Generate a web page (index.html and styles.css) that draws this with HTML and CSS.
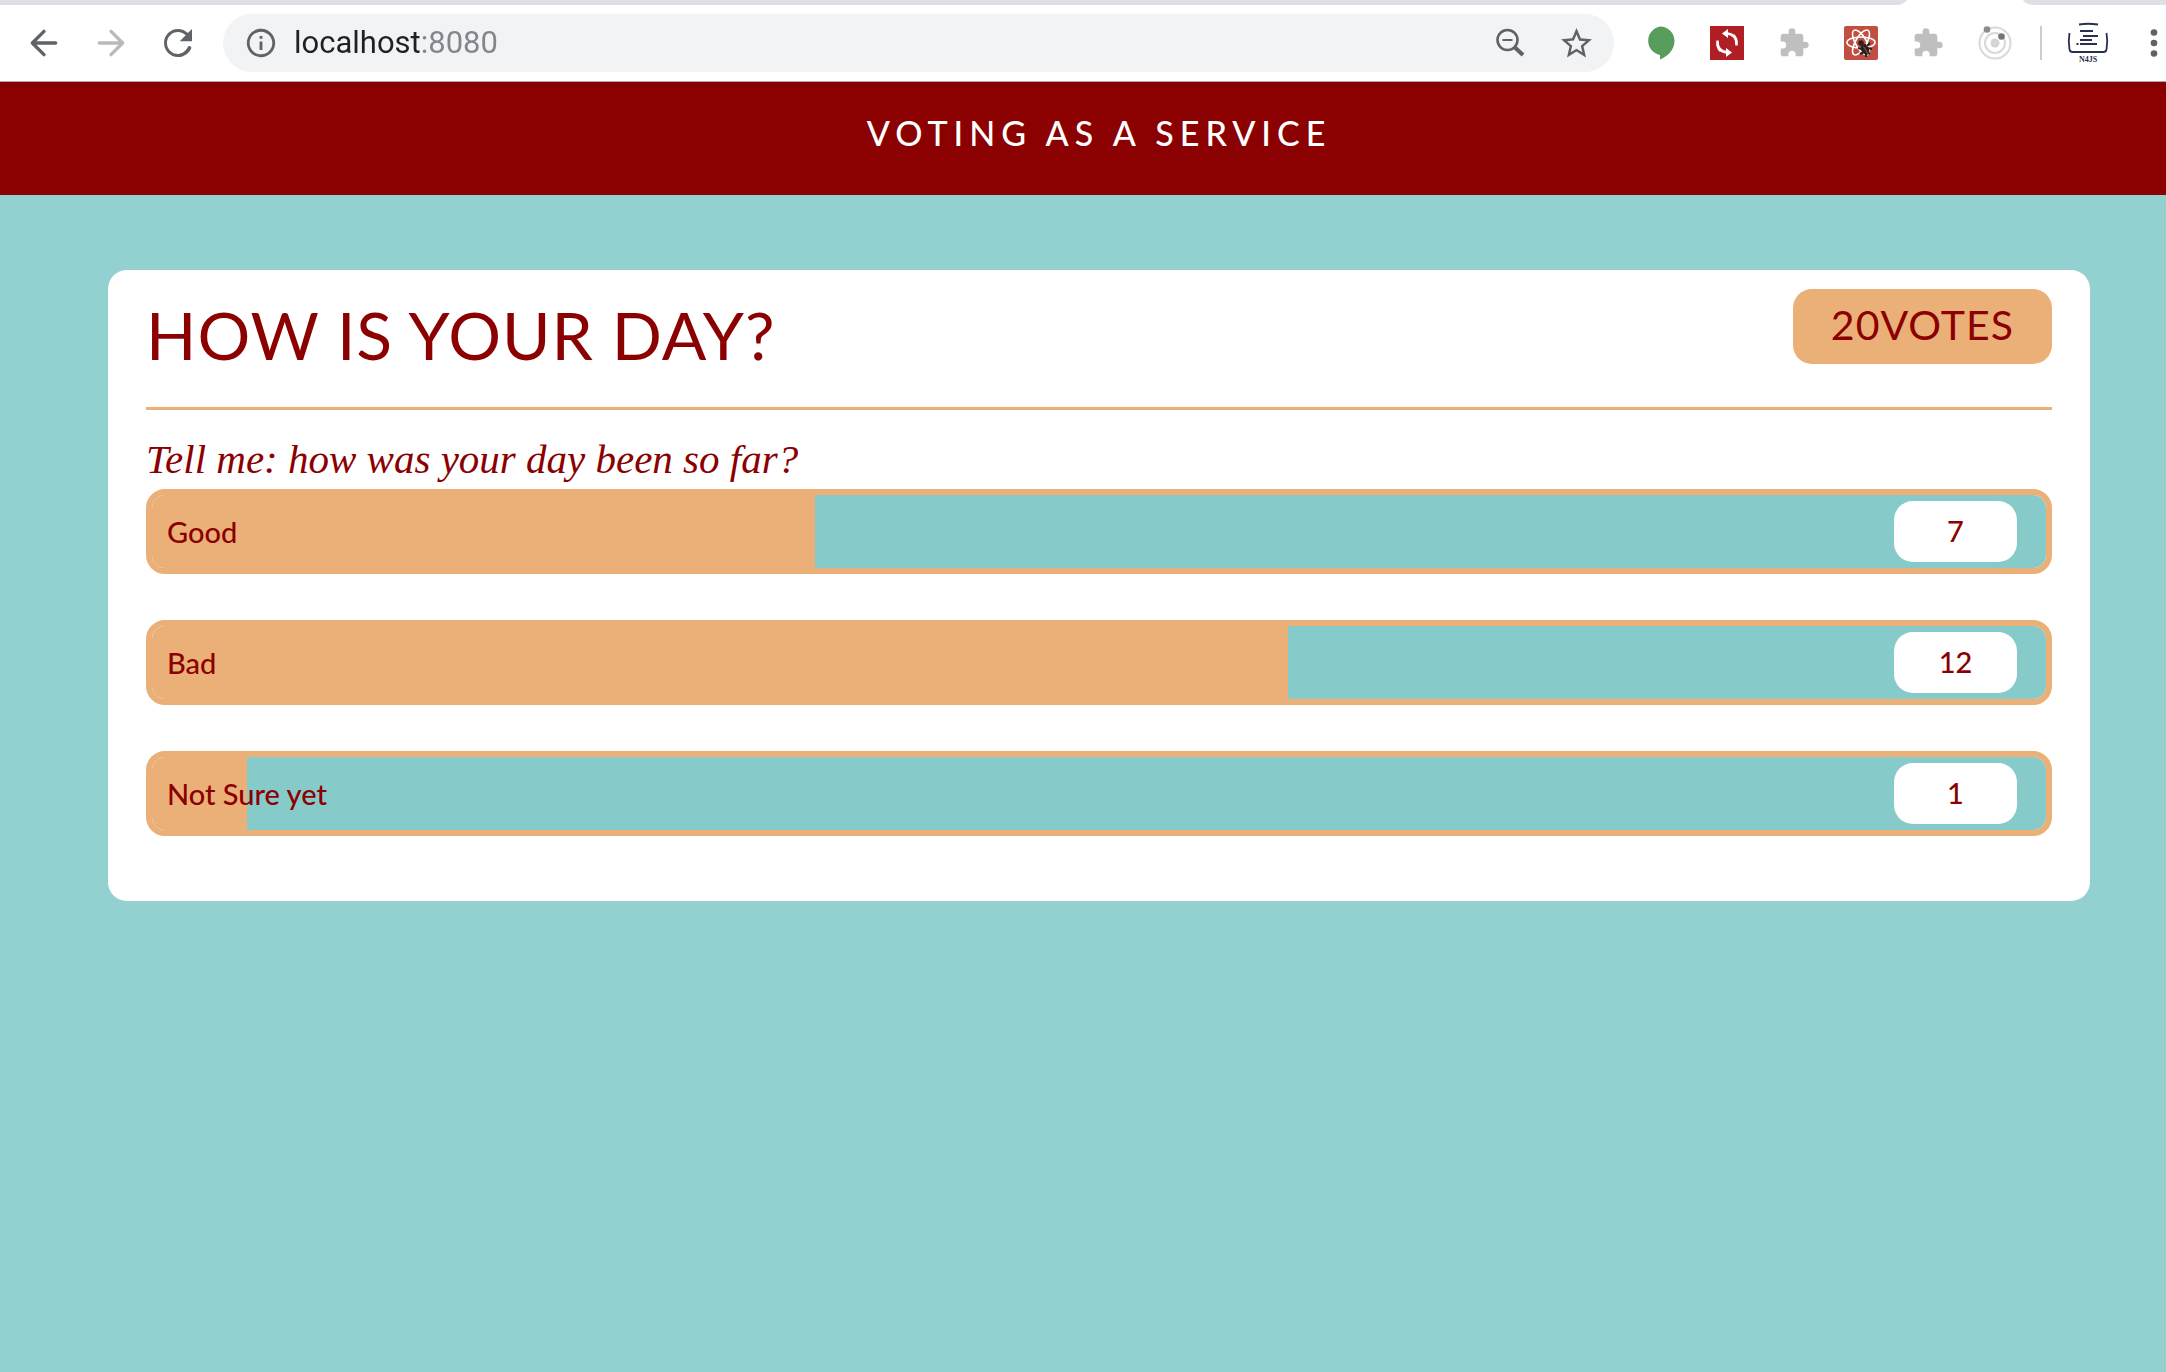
FILE: index.html
```html
<!DOCTYPE html>
<html lang="en">
<head>
<meta charset="utf-8">
<meta name="viewport" content="width=device-width, initial-scale=1">
<title>Voting as a Service</title>
<link rel="stylesheet" href="styles.css">
</head>
<body>
<div class="tabstrip">
  <svg class="active-tab" width="136" height="5" viewBox="0 0 136 5" aria-hidden="true"><path d="M0 5C6 4.500 9 2 10 0H126C127 2 130 4.500 136 5z" fill="#fff"/></svg>
</div>
<nav class="toolbar" aria-label="Browser">
  <button class="tool" type="button" aria-label="Back"><svg width="40" height="40" viewBox="0 0 24 24" fill="none" stroke="#5f6368" stroke-width="2" stroke-linecap="round" stroke-linejoin="round"><path d="M19 12H5M12 5l-7 7 7 7"/></svg></button>
  <button class="tool" type="button" aria-label="Forward"><svg width="40" height="40" viewBox="0 0 24 24" fill="none" stroke="#bababa" stroke-width="2" stroke-linecap="round" stroke-linejoin="round"><path d="M5 12h14M12 5l7 7-7 7"/></svg></button>
  <button class="tool" type="button" aria-label="Reload"><svg width="42" height="42" viewBox="0 0 24 24" fill="#5f6368"><path d="M17.65 6.35C16.2 4.9 14.21 4 12 4c-4.42 0-7.99 3.58-7.99 8s3.57 8 7.99 8c3.4 0 6.5-2.2 7.6-5.2.3-.9-1.500-1.600-1.950-.6C16.700 16.500 14.500 18.300 12 18.300c-3.400 0-6.300-2.800-6.300-6.300S8.600 5.700 12 5.700c1.800 0 3.300.700 4.400 1.900L13 11h7V4z"/></svg></button>
  <div class="omnibox">
    <svg width="34" height="34" viewBox="0 0 24 24" fill="#5f6368" aria-hidden="true"><path d="M11 17h2v-6h-2v6zm1-15C6.480 2 2 6.480 2 12s4.480 10 10 10 10-4.480 10-10S17.520 2 12 2zm0 18c-4.410 0-8-3.590-8-8s3.590-8 8-8 8 3.590 8 8-3.590 8-8 8zM11 9h2V7h-2v2z"/></svg>
    <input class="address" type="text" aria-label="Address" value="localhost:8080">
    <button class="tool" type="button" aria-label="Zoom"><svg width="40" height="40" viewBox="0 0 40 40" fill="none" stroke="#5f6368"><circle cx="17.500" cy="17" r="10" stroke-width="2.600"/><path d="M12.500 17h10" stroke-width="2"/><path d="M25 24.500l8 7.500" stroke-width="4"/></svg></button>
    <button class="tool" type="button" aria-label="Bookmark"><svg width="37" height="37" viewBox="0 0 24 24" fill="#5f6368"><path d="M22 9.240l-7.190-.62L12 2 9.190 8.630 2 9.240l5.460 4.730L5.820 21 12 17.270 18.180 21l-1.630-7.030L22 9.240zM12 15.400l-3.760 2.270 1-4.280-3.320-2.880 4.380-.38L12 6.100l1.710 4.040 4.380.38-3.320 2.880 1 4.280L12 15.400z"/></svg></button>
  </div>
  <button class="tool" type="button" aria-label="Chat"><svg width="34" height="34" viewBox="0 0 34 34"><path d="M17 .5a14.500 14.500 0 0 1 14.500 14.500c0 9-7 15.500-14.500 18.500v-4.500A14.500 14.500 0 0 1 17 .5z" fill="#589d5c"/></svg></button>
  <button class="tool" type="button" aria-label="Sync"><svg width="34" height="34" viewBox="0 0 34 34"><path d="M0 0h34v34H0z" fill="#b11f24"/><g fill="none" stroke="#fff" stroke-width="2.400"><path d="M10.500 25A10 10 0 0 1 7.800 16M23.500 9A10 10 0 0 1 26.200 18"/><path d="M7.800 18A10 10 0 0 0 14 26.800M26.200 16A10 10 0 0 0 20 7.500" stroke-width="0"/><path d="M13 26Q20 29 24.500 23M21 8Q14 5 9.500 11" stroke-width="0"/><path d="M16 7.500Q27 8 26.500 19.500M18 26.500Q7 26 7.500 14.500"/></g><path d="M12 7.500l6-4.500v9zM22 26.500l-6 4.500v-9z" fill="#fff"/></svg></button>
  <button class="tool" type="button" aria-label="Extension one"><svg width="32" height="32" viewBox="0 0 24 24" fill="#bfbfbf"><path d="M20.500 11H19V7c0-1.100-.9-2-2-2h-4V3.500a2.500 2.500 0 0 0-5 0V5H4c-1.100 0-1.990.9-1.990 2v3.800H3.500a2.700 2.700 0 0 1 0 5.400H2V20c0 1.100.9 2 2 2h3.800v-1.500a2.700 2.700 0 0 1 5.400 0V22H17c1.100 0 2-.9 2-2v-4h1.500a2.500 2.500 0 0 0 0-5z"/></svg></button>
  <button class="tool" type="button" aria-label="React developer tools"><svg width="34" height="34" viewBox="0 0 34 34"><rect width="34" height="34" rx="2" fill="#c04f42"/><g fill="none" stroke="#fff" stroke-width="1.600"><ellipse cx="17" cy="16.500" rx="14" ry="5.500"/><ellipse cx="17" cy="16.500" rx="14" ry="5.500" transform="rotate(60 17 16.500)"/><ellipse cx="17" cy="16.500" rx="14" ry="5.500" transform="rotate(120 17 16.500)"/></g><g fill="#2b211f" stroke="#2b211f"><circle cx="17" cy="17" r="2.800" stroke="none"/><ellipse cx="21" cy="23.500" rx="3.800" ry="5.500" transform="rotate(-35 21 23.500)" stroke="none"/><path d="M14 22l4 1M16 28l4-2M26 28l-2-1M28 23l-4-1M26 17l-3 3M21 18v3M22 31v-3" stroke-width="2.200"/></g><path d="M19.500 20.500l4.500 7" stroke="#c04f42"/></svg></button>
  <button class="tool" type="button" aria-label="Extension two"><svg width="32" height="32" viewBox="0 0 24 24" fill="#bfbfbf"><path d="M20.500 11H19V7c0-1.100-.9-2-2-2h-4V3.500a2.500 2.500 0 0 0-5 0V5H4c-1.100 0-1.990.9-1.990 2v3.800H3.500a2.700 2.700 0 0 1 0 5.400H2V20c0 1.100.9 2 2 2h3.800v-1.500a2.700 2.700 0 0 1 5.400 0V22H17c1.100 0 2-.9 2-2v-4h1.500a2.500 2.500 0 0 0 0-5z"/></svg></button>
  <button class="tool" type="button" aria-label="Orbit"><svg width="34" height="34" viewBox="0 0 34 34"><g fill="none" stroke="#d9d9d9" stroke-width="2"><circle cx="17" cy="17" r="15.500"/><circle cx="17" cy="17" r="10"/></g><circle cx="17" cy="17" r="4.500" fill="#d4d4d4"/><circle cx="9" cy="3.500" r="3.300" fill="#8c8c8c"/><circle cx="23.500" cy="10.500" r="3.300" fill="#757575"/></svg></button>
  <span class="divider"></span>
  <button class="tool" type="button" aria-label="Profile"><svg width="42" height="42" viewBox="0 0 42 42"><g fill="none" stroke="#2a3050" stroke-width="1.800"><path d="M12 2.500q9-1.500 19 0M2.500 11q-1.500 8 0 16.500q.5 2.500 3 2.500h31q2.500 0 3-2.500q1.500-8.500 0-16.500M13 9h13M16 14h15M13 18h12M13 22h17M9.500 22h2"/></g><text x="21" y="40" text-anchor="middle" class="badge-text">N4JS</text></svg></button>
  <button class="tool menu" type="button" aria-label="Menu"><svg width="8" height="28" viewBox="0 0 8 28" fill="#5f6368"><circle cx="4" cy="3.500" r="3.300"/><circle cx="4" cy="14" r="3.300"/><circle cx="4" cy="24.500" r="3.300"/></svg></button>
</nav>
<header class="banner">Voting as a Service</header>
<main class="card">
  <div class="card-head">
    <h1 class="title">How is your day?</h1>
    <span class="total">20Votes</span>
  </div>
  <p class="question">Tell me: how was your day been so far?</p>
  <div class="options">
    <button class="option" type="button" style="--share: 35%"><span>Good</span><span class="count">7</span></button>
    <button class="option" type="button" style="--share: 60%"><span>Bad</span><span class="count">12</span></button>
    <button class="option" type="button" style="--share: 5%"><span>Not Sure yet</span><span class="count">1</span></button>
  </div>
</main>
</body>
</html>
```
FILE: styles.css
```css
:root {
  --red: #8b0000;
  --sand: #ebb078;
  --teal: #87caca;
}

* {
  box-sizing: border-box;
}

body {
  margin: 0;
  min-height: 100vh;
  background: #93d0d0;
  color: var(--red);
  font-family: Lato, "Open Sans", sans-serif;
  overflow-x: hidden;
}

.tabstrip {
  display: flex;
  justify-content: flex-end;
  height: 5px;
  padding-right: 133px;
  background: #dee0e6;
}

.active-tab {
  display: block;
}

.toolbar {
  display: flex;
  align-items: center;
  height: 77px;
  padding-left: 10px;
  background: #fff;
  border-bottom: 1px solid #b5a5a8;
}

.tool {
  display: flex;
  flex: none;
  align-items: center;
  justify-content: center;
  width: 67px;
  height: 58px;
  padding: 0;
  border: 0;
  background: none;
}

.menu {
  width: 45px;
  padding-left: 21px;
}

.omnibox {
  display: flex;
  flex: 1;
  align-items: center;
  height: 58px;
  margin: 0 12px;
  padding: 0 4px 0 21px;
  border-radius: 29px;
  background: #f1f3f4;
}

.address {
  flex: 1;
  min-width: 0;
  height: 58px;
  padding: 0 0 2px;
  margin-left: 16px;
  border: 0;
  outline: 0;
  background: linear-gradient(to right, #202124 127px, #80868b 127px);
  background-clip: text;
  -webkit-background-clip: text;
  color: transparent;
  font: 31px Roboto, sans-serif;
}

.divider {
  flex: none;
  width: 2px;
  height: 34px;
  margin: 0 12px;
  background: #cdcdcd;
}

.badge-text {
  fill: #2a3050;
  font: bold 8px "Liberation Serif", serif;
}

.banner {
  height: 113px;
  padding: 29px 0 0 32px;
  background: var(--red);
  color: #fff;
  font-size: 34px;
  font-weight: 500;
  line-height: 44px;
  letter-spacing: 6px;
  text-align: center;
  text-transform: uppercase;
}

.card {
  margin: 75px 76px 0 108px;
  padding: 19px 38px 65px;
  border-radius: 19px;
  background: #fff;
}

.card-head {
  display: flex;
  align-items: flex-start;
  justify-content: space-between;
  height: 121px;
  border-bottom: 3px solid var(--sand);
  text-transform: uppercase;
}

.title {
  margin: 0;
  font-size: 66px;
  font-weight: 400;
  line-height: 92px;
  letter-spacing: 1px;
}

.total {
  padding: 0 38px 4px;
  border-radius: 19px;
  background: var(--sand);
  font-size: 41px;
  line-height: 71px;
  letter-spacing: 1px;
}

.question {
  margin: 0;
  padding: 22px 0 3px;
  font: italic 41px/54px "Liberation Serif", serif;
}

.options {
  display: flex;
  flex-direction: column;
  gap: 46px;
}

.option {
  display: flex;
  align-items: center;
  justify-content: space-between;
  height: 85px;
  padding: 0 29px 0 15px;
  border: 6px solid var(--sand);
  border-radius: 19px;
  background: linear-gradient(to right, var(--sand) var(--share), var(--teal) 0) padding-box;
  color: var(--red);
  font: 500 29px Lato, "Open Sans", sans-serif;
}

.count {
  width: 123px;
  padding-bottom: 2px;
  border-radius: 19px;
  background: #fff;
  line-height: 59px;
  text-align: center;
}
```
